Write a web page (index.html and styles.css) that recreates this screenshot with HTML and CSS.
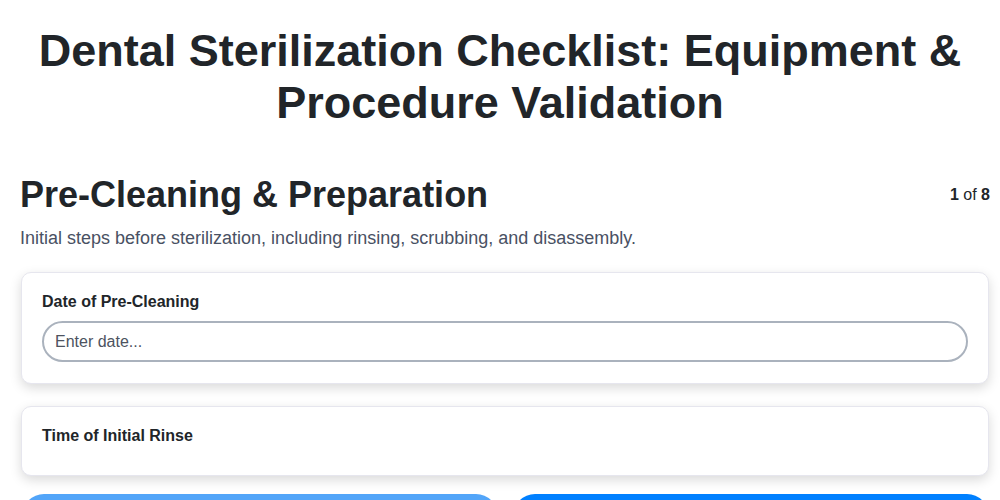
FILE: index.html
```html
<!DOCTYPE html>
<html lang="en">
<head>
<meta charset="utf-8">
<title>Dental Sterilization Checklist</title>
<link rel="stylesheet" href="styles.css">
</head>
<body>
<div class="page">
  <h1 class="title">Dental Sterilization Checklist: Equipment &amp; Procedure Validation</h1>
  <div class="section-head">
    <h2 class="section-title">Pre-Cleaning &amp; Preparation</h2>
    <div class="progress"><b>1</b> of <b>8</b></div>
  </div>
  <p class="section-desc">Initial steps before sterilization, including rinsing, scrubbing, and disassembly.</p>
  <div class="card">
    <label class="field-label">Date of Pre-Cleaning</label>
    <input class="field-input" type="text" placeholder="Enter date...">
  </div>
  <div class="card card-last">
    <label class="field-label">Time of Initial Rinse</label>
  </div>
  <div class="actions">
    <button class="btn btn-prev">Previous</button>
    <button class="btn btn-next">Next</button>
  </div>
</div>
</body>
</html>
```
FILE: styles.css
```css
* { box-sizing: border-box; }
html, body { margin: 0; padding: 0; background: #ffffff; }
body {
  font-family: "Liberation Sans", Arial, sans-serif;
  color: #212529;
}
.page {
  padding: 0 10px 0 20px;
}
.title {
  margin: 25px 0 0 -10px;
  text-align: center;
  font-size: 45px;
  line-height: 52px;
  font-weight: 700;
  color: #212529;
}
.section-head {
  display: flex;
  justify-content: space-between;
  align-items: center;
  margin-top: 44px;
}
.section-title {
  margin: 0;
  font-size: 36px;
  line-height: 44px;
  font-weight: 700;
}
.progress {
  font-size: 16px;
  color: #212529;
}
.section-desc {
  margin: 10px 0 23px;
  font-size: 18px;
  line-height: 22px;
  color: #495163;
}
.card {
  margin: 0 1px 22px 1px;
  padding: 20px 20px 21px;
  background: #fff;
  border: 1px solid #e6e6ee;
  border-radius: 10px;
  box-shadow: 0 4px 12px rgba(0, 0, 0, 0.15);
}
.card-last {
  margin-bottom: 18px;
  padding-bottom: 20px;
}
.field-label {
  display: block;
  font-size: 16px;
  line-height: 18px;
  font-weight: 700;
  margin-bottom: 10px;
}
.field-input {
  display: block;
  width: 100%;
  height: 41px;
  padding: 0 11px;
  border: 2px solid #aab2bd;
  border-radius: 21px;
  font-family: "Liberation Sans", Arial, sans-serif;
  font-size: 16px;
  color: #212529;
  background: #fff;
  outline: none;
}
.field-input::placeholder { color: #4d5360; }
.actions {
  display: flex;
  gap: 15px;
  margin: 0 1px 0 2px;
}
.btn {
  flex: 1;
  height: 44px;
  border: none;
  border-radius: 22px;
  font-family: "Liberation Sans", Arial, sans-serif;
  font-size: 16px;
  font-weight: 700;
  color: #fff;
}
.btn-prev { background: #52a5f9; }
.btn-next { background: #0080ff; }
```
